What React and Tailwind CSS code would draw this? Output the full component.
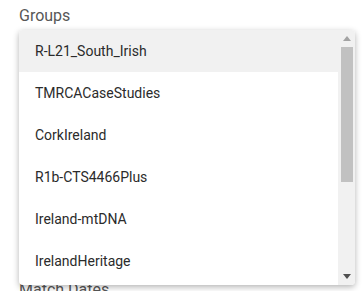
import React from "react";

const groups = [
  "R-L21_South_Irish",
  "TMRCACaseStudies",
  "CorkIreland",
  "R1b-CTS4466Plus",
  "Ireland-mtDNA",
  "IrelandHeritage",
  "IrishDNA",
];

export default function App() {
  return (
    <div className="relative h-[291px] w-[364px] overflow-hidden bg-white font-['Roboto',sans-serif]">
      <div className="px-[19px] pt-[6px]">
        <div className="text-[16px] leading-[20px] text-[#575757]">Groups</div>
        <div className="h-[254px]" />
        <div className="text-[16px] leading-[20px] text-[#575757]">Match Dates</div>
      </div>

      <div className="absolute left-[19px] top-[30px] flex h-[255px] w-[336px] overflow-hidden rounded-[4px] bg-white shadow-[0_2px_6px_rgba(0,0,0,0.3)]">
        <div className="flex-1 overflow-hidden">
          {groups.map((g, i) => (
            <div
              key={g}
              className={
                "flex h-[42px] items-center pl-[16px] text-[14px] text-[#2b2b2b] " +
                (i === 0 ? "bg-[#f1f1f1]" : "")
              }
            >
              {g}
            </div>
          ))}
        </div>
        <div className="flex w-[17px] flex-col items-center bg-[#f1f1f1]">
          <div className="flex h-[17px] items-center justify-center">
            <svg width="8" height="5" viewBox="0 0 8 5">
              <path d="M4 0 L8 5 L0 5 Z" fill="#a3a3a3" />
            </svg>
          </div>
          <div className="h-[135px] w-[12px] bg-[#c1c1c1]" />
          <div className="flex-1" />
          <div className="flex h-[17px] items-center justify-center">
            <svg width="8" height="5" viewBox="0 0 8 5">
              <path d="M0 0 L8 0 L4 5 Z" fill="#505050" />
            </svg>
          </div>
        </div>
      </div>
    </div>
  );
}
